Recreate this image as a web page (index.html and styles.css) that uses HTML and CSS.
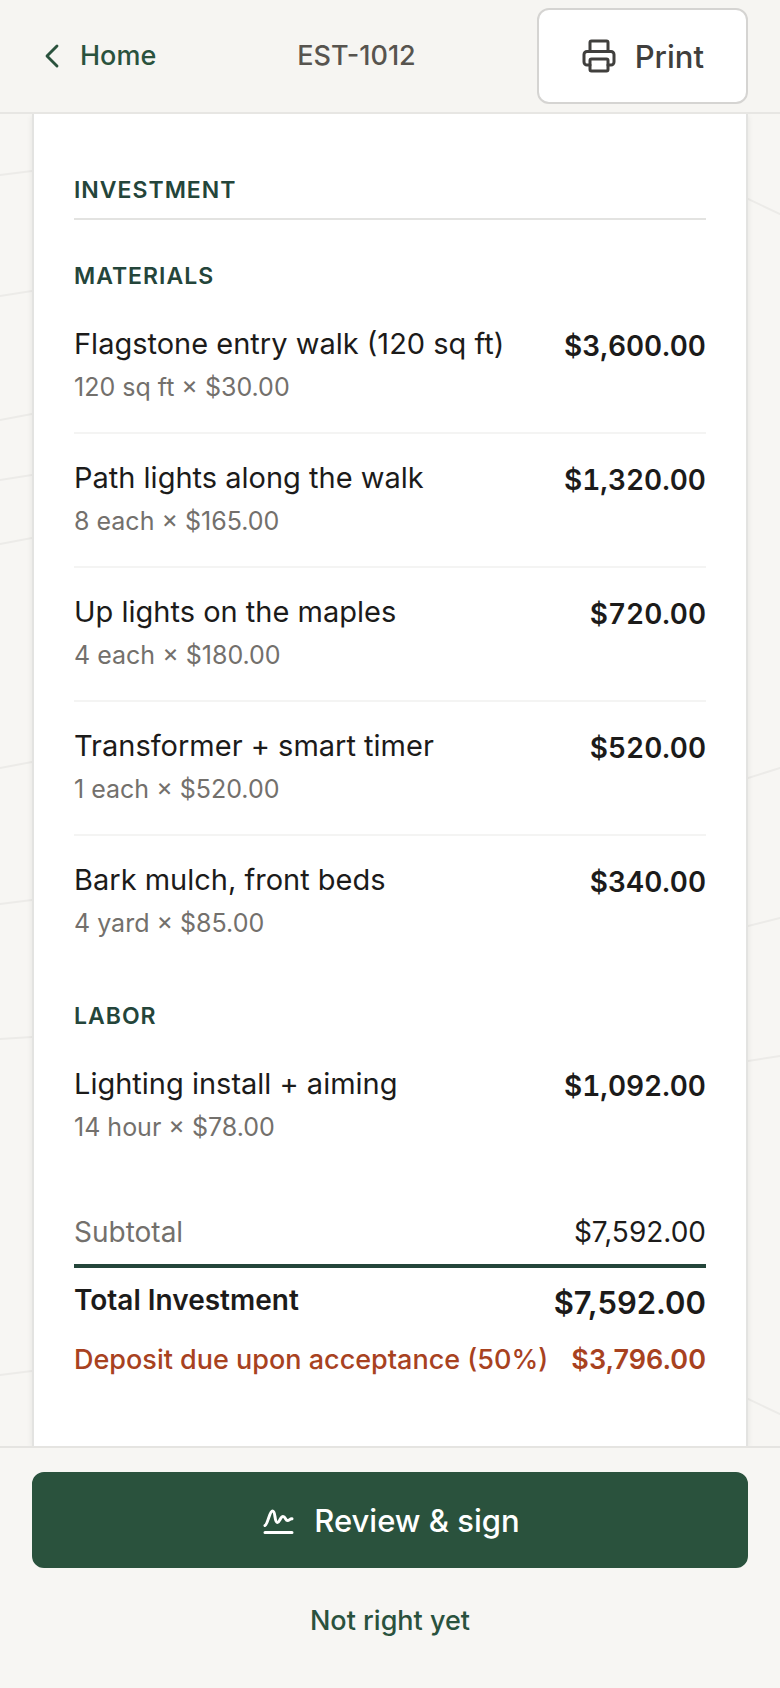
FILE: index.html
```
<!DOCTYPE html>
<html lang="en">
<head>
    <meta charset="UTF-8">
    <meta name="viewport" content="width=device-width, initial-scale=1.0">
    <title>Estimate EST-1012</title>
    <link rel="stylesheet" href="styles.css">
</head>
<body>
    <header class="topbar">
        <a class="back" href="#home">
            <svg class="icon-back" viewBox="0 0 24 24" aria-hidden="true"><path d="m15 18-6-6 6-6"/></svg>
            Home
        </a>
        <span class="doc-number">EST-1012</span>
        <button type="button" class="btn btn-outline">
            <svg class="icon" viewBox="0 0 24 24" aria-hidden="true">
                <path d="M6 18H4a2 2 0 0 1-2-2v-5a2 2 0 0 1 2-2h16a2 2 0 0 1 2 2v5a2 2 0 0 1-2 2h-2"/>
                <path d="M6 9V3a1 1 0 0 1 1-1h10a1 1 0 0 1 1 1v6"/>
                <rect x="6" y="14" width="12" height="8" rx="1"/>
            </svg>
            Print
        </button>
    </header>

    <main class="page">
        <!-- Contour lines in the page margins -->
        <svg class="contours contours-left" viewBox="0 0 32 1332" aria-hidden="true">
            <path d="M0 61 32 57M0 182 32 177M0 306 32 300M0 366 32 361M0 430 32 424M0 654 32 648M0 790 32 786M0 925 32 923M0 1261 32 1257"/>
        </svg>
        <svg class="contours contours-right" viewBox="0 0 32 1332" aria-hidden="true">
            <path d="M0 85 32 100M0 664 32 654M0 812 32 804M0 947 32 942M0 1285 32 1300"/>
        </svg>

        <article class="card">
            <h2 class="section-title">Investment</h2>

            <section class="group">
                <h3 class="group-title">Materials</h3>
                <ul class="items">
                    <li class="item">
                        <div class="item-info">
                            <p class="item-name">Flagstone entry walk (120 sq ft)</p>
                            <p class="item-qty">120 sq ft × $30.00</p>
                        </div>
                        <span class="price">$3,600.00</span>
                    </li>
                    <li class="item">
                        <div class="item-info">
                            <p class="item-name">Path lights along the walk</p>
                            <p class="item-qty">8 each × $165.00</p>
                        </div>
                        <span class="price">$1,320.00</span>
                    </li>
                    <li class="item">
                        <div class="item-info">
                            <p class="item-name">Up lights on the maples</p>
                            <p class="item-qty">4 each × $180.00</p>
                        </div>
                        <span class="price">$720.00</span>
                    </li>
                    <li class="item">
                        <div class="item-info">
                            <p class="item-name">Transformer + smart timer</p>
                            <p class="item-qty">1 each × $520.00</p>
                        </div>
                        <span class="price">$520.00</span>
                    </li>
                    <li class="item">
                        <div class="item-info">
                            <p class="item-name">Bark mulch, front beds</p>
                            <p class="item-qty">4 yard × $85.00</p>
                        </div>
                        <span class="price">$340.00</span>
                    </li>
                </ul>
            </section>

            <section class="group">
                <h3 class="group-title">Labor</h3>
                <ul class="items">
                    <li class="item">
                        <div class="item-info">
                            <p class="item-name">Lighting install + aiming</p>
                            <p class="item-qty">14 hour × $78.00</p>
                        </div>
                        <span class="price">$1,092.00</span>
                    </li>
                </ul>
            </section>

            <dl class="totals">
                <div class="total-row subtotal">
                    <dt>Subtotal</dt>
                    <dd>$7,592.00</dd>
                </div>
                <div class="total-row grand-total">
                    <dt>Total Investment</dt>
                    <dd>$7,592.00</dd>
                </div>
                <div class="total-row deposit">
                    <dt>Deposit due upon acceptance (50%)</dt>
                    <dd>$3,796.00</dd>
                </div>
            </dl>
        </article>
    </main>

    <footer class="actions">
        <button type="button" class="btn btn-primary">
            <svg class="icon" viewBox="0 0 36 36" aria-hidden="true">
                <path d="M5 23.5C8 22 9.500 9 12.500 9C16 9 14 20.500 17.500 20.500C19.500 20.500 20.500 14.500 23 14.500C25.500 14.500 25.500 18.500 27.500 18.500C29.500 18.500 30 16.500 32 16.800M5 30.500H32"/>
            </svg>
            Review &amp; sign
        </button>
        <button type="button" class="btn-link">Not right yet</button>
    </footer>
</body>
</html>
```
FILE: styles.css
```
* {
    box-sizing: border-box;
}
body {
    margin: 0;
    min-height: 100vh;
    display: flex;
    flex-direction: column;
    background-color: #f7f6f3;
    color: #1c1b1a;
    font-family: Inter, "Liberation Sans", sans-serif;
    font-size: 28px;
    line-height: 40px;
}
h2, h3, p, ul, dl, dd {
    margin: 0;
    padding: 0;
}
button {
    font-family: inherit;
    cursor: pointer;
}
svg {
    fill: none;
    stroke: currentColor;
    stroke-width: 2;
    stroke-linecap: round;
    stroke-linejoin: round;
}

/* Top bar */
.topbar {
    position: sticky;
    top: 0;
    z-index: 1;
    display: flex;
    align-items: center;
    justify-content: space-between;
    padding: 8px 32px;
    background-color: #f6f5f2;
    border-bottom: 2px solid #e7e6e3;
}
.back {
    display: flex;
    align-items: center;
    gap: 8px;
    padding-right: 20px;
    color: #2a523d;
    font-size: 27px;
    font-weight: 500;
    text-decoration: none;
}
.icon-back {
    width: 40px;
    height: 40px;
    stroke-width: 1.7;
}
.doc-number {
    color: #57544f;
    font-size: 27px;
    font-weight: 500;
}
.icon {
    width: 36px;
    height: 36px;
}
.btn {
    display: flex;
    align-items: center;
    justify-content: center;
    gap: 18px;
    height: 96px;
    padding: 0 42px;
    border: 2px solid transparent;
    border-radius: 12px;
    font-size: 31px;
    font-weight: 500;
}
.btn-outline {
    background-color: #fff;
    border-color: #d5d4d2;
    color: #403f3d;
}
.btn-primary {
    width: 100%;
    background-color: #2a523d;
    border-color: #2a523d;
    color: #fff;
}
.btn-primary .icon {
    stroke-width: 3;
}

/* Estimate sheet */
.page {
    position: relative;
    flex: 1;
    display: flex;
    flex-direction: column;
    padding: 0 32px;
}
.contours {
    position: absolute;
    top: 0;
    width: 32px;
    height: 1332px;
    color: #ecebe8;
}
.contours-left {
    left: 0;
}
.contours-right {
    right: 0;
}
.card {
    position: relative;
    flex: 1;
    padding: 60px 40px 40px;
    background-color: #fff;
    border: solid #e3e3e1;
    border-width: 0 2px;
    box-shadow: 0 2px 6px rgba(0, 0, 0, 0.08);
}
.section-title, .group-title {
    color: #24453a;
    font-size: 23px;
    font-weight: 600;
    line-height: 32px;
    letter-spacing: 1px;
    text-transform: uppercase;
}
.section-title {
    padding-bottom: 12px;
    border-bottom: 2px solid #e3e3e1;
}
.group {
    margin-top: 32px;
}
.section-title + .group {
    margin-top: 40px;
}
.group-title {
    margin-bottom: 8px;
}
.items {
    list-style: none;
}
.item {
    display: flex;
    justify-content: space-between;
    gap: 24px;
    padding: 24px 0 22px;
}
.item + .item {
    border-top: 2px solid #f4f4f3;
}
.item-name {
    font-size: 29px;
    line-height: 40px;
}
.item-qty {
    color: #73706c;
    font-size: 25px;
    line-height: 46px;
}
.price {
    font-size: 28px;
    font-weight: 600;
    line-height: 44px;
    font-variant-numeric: tabular-nums;
}

/* Totals */
.totals {
    margin-top: 40px;
}
.total-row {
    display: flex;
    justify-content: space-between;
    gap: 16px;
}
.subtotal {
    padding-bottom: 12px;
}
.subtotal dt {
    color: #73706c;
}
.grand-total {
    padding: 12px 0 14px;
    border-top: 4px solid #24453a;
    font-weight: 600;
}
.grand-total dd {
    font-size: 31px;
    line-height: 46px;
}
.deposit {
    color: #a8421f;
    font-size: 27px;
    font-weight: 500;
}
.deposit dd {
    font-weight: 600;
}

/* Sticky actions */
.actions {
    position: sticky;
    bottom: 0;
    z-index: 1;
    display: flex;
    flex-direction: column;
    align-items: center;
    gap: 8px;
    padding: 24px 32px;
    background-color: #f7f6f3;
    border-top: 2px solid #e5e4e1;
}
.btn-link {
    height: 88px;
    padding: 0 24px;
    background: none;
    border: 0;
    color: #2a523d;
    font-size: 27px;
    font-weight: 500;
}
```
